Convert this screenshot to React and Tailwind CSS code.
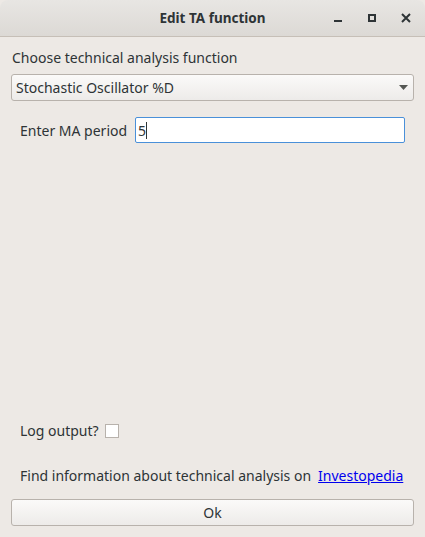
export default function App() {
  return (
    <div className="w-[425px] h-[537px] bg-[#ede9e5] flex flex-col overflow-hidden text-[#2e3436]" style={{ fontFamily: '"Noto Sans", sans-serif' }}>
      <div className="h-[37px] shrink-0 rounded-t-[8px] bg-gradient-to-b from-[#e8e6e3] to-[#dcd9d5] border-b border-[#c6bfb7] relative flex items-center justify-center">
        <span className="text-[13.5px] font-bold text-[#2e3436]">Edit TA function</span>
        <div className="absolute right-0 top-0 h-full flex items-center">
          <div className="w-[34px] flex justify-center">
            <div className="w-[8px] h-[2px] bg-[#2e3436] mt-[6px]" />
          </div>
          <div className="w-[34px] flex justify-center">
            <div className="w-[8px] h-[8px] border-2 border-[#2e3436]" />
          </div>
          <div className="w-[34px] flex justify-center mr-[2px]">
            <svg width="10" height="10" viewBox="0 0 10 10"><path d="M1 1L9 9M9 1L1 9" stroke="#2e3436" strokeWidth="2" /></svg>
          </div>
        </div>
      </div>
      <div className="flex-1 flex flex-col px-[11px] pt-[11px] pb-[11px] text-[14px]">
        <div className="pl-[1px] h-[20px] leading-[20px]">Choose technical analysis function</div>
        <div className="mt-[6px] h-[27px] border border-[#b8b2ac] rounded-[3px] bg-gradient-to-b from-[#fbfaf9] to-[#edebe9] flex items-center pl-[4px] pr-[5px]">
          <span className="flex-1">Stochastic Oscillator %D</span>
          <svg width="9" height="5" viewBox="0 0 9 5"><path d="M0 0H9L4.5 5Z" fill="#555753" /></svg>
        </div>
        <div className="mt-[16px] flex items-center pl-[9px] pr-[9px]">
          <span>Enter MA period</span>
          <div className="ml-[8px] flex-1 h-[26px] bg-white border border-[#4a90d9] rounded-[2px] flex items-center pl-[2px]">
            <span>5</span>
            <span className="w-[1px] h-[17px] bg-[#2e3436]" />
          </div>
        </div>
        <div className="flex-1" />
        <div className="flex items-center pl-[9px]">
          <span>Log output?</span>
          <span className="ml-[6px] w-[14px] h-[14px] bg-white border border-[#b8b2ac]" />
        </div>
        <div className="mt-[24px] flex items-center pl-[9px]">
          <span>Find information about technical analysis on</span>
          <span className="ml-[7px] text-[#0000ee] underline">Investopedia</span>
        </div>
        <div className="mt-[13px] h-[27px] border border-[#b8b2ac] rounded-[3px] bg-gradient-to-b from-[#fbfaf9] to-[#edebe9] flex items-center justify-center">
          Ok
        </div>
      </div>
    </div>
  );
}
